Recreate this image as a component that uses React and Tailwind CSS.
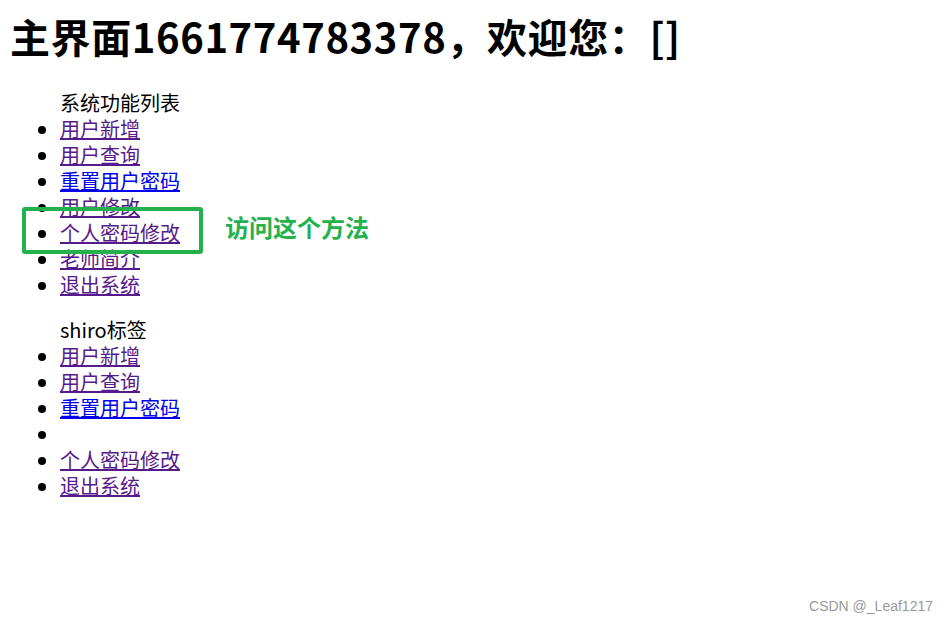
export default function App() {
  const visited = "text-[#551a8b] underline";
  const fresh = "text-[#0000ee] underline";
  const list1 = [
    ["用户新增", visited],
    ["用户查询", visited],
    ["重置用户密码", fresh],
    ["用户修改", visited],
    ["个人密码修改", visited],
    ["老师简介", visited],
    ["退出系统", visited],
  ];
  const list2 = [
    ["用户新增", visited],
    ["用户查询", visited],
    ["重置用户密码", fresh],
    ["", visited],
    ["个人密码修改", visited],
    ["退出系统", visited],
  ];
  return (
    <div
      className="relative h-[622px] w-[948px] overflow-hidden bg-white pl-[10px] pt-[10px] text-black"
      style={{ fontFamily: '"Noto Sans CJK SC", "Noto Sans", sans-serif' }}
    >
      <h1 className="h-[53px] text-[40px] font-bold leading-[53px] tracking-[0.6px]">
        主界面1661774783378，欢迎您：[]
      </h1>
      <ul className="mt-[27px] list-disc pl-[50px] text-[20px] leading-[26px]">
        <span className="block">系统功能列表</span>
        {list1.map(([t, c], i) => (
          <li key={i}>
            <a href="#" className={c}>{t}</a>
          </li>
        ))}
      </ul>
      <ul className="mt-[19px] list-disc pl-[50px] text-[20px] leading-[26px]">
        <span className="block">shiro标签</span>
        {list2.map(([t, c], i) => (
          <li key={i}>
            {t ? <a href="#" className={c}>{t}</a> : null}
          </li>
        ))}
      </ul>

      <div className="absolute left-[22px] top-[207px] h-[47px] w-[181px] rounded-[3px] border-[4px] border-[#22b14c]" />
      <div className="absolute left-[225px] top-[209px] text-[24px] font-bold leading-[36px] text-[#22b14c]">
        访问这个方法
      </div>

      <div
        className="absolute right-[15px] top-[596px] text-[14px] leading-[20px] text-[#999999]"
        style={{ fontFamily: '"Liberation Sans", Arial, sans-serif' }}
      >
        CSDN @_Leaf1217
      </div>
    </div>
  );
}
